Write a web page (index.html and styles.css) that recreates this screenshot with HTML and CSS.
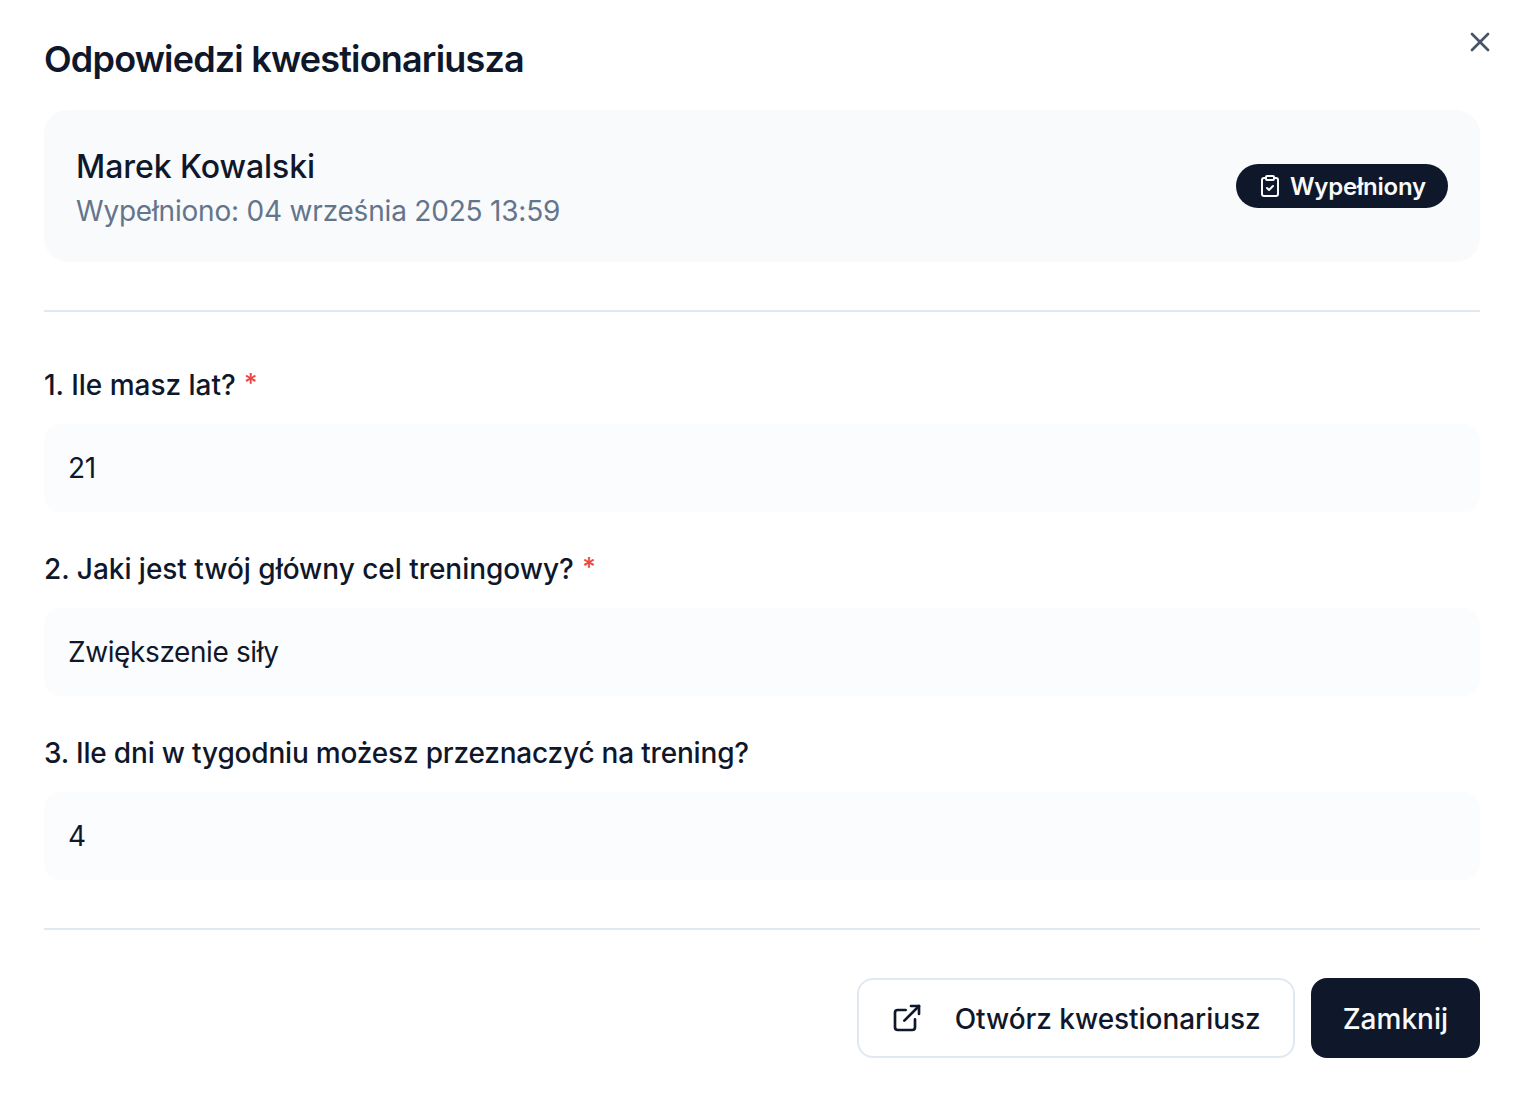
FILE: index.html
```html
<!DOCTYPE html>
<html lang="pl">
<head>
    <meta charset="UTF-8">
    <title>Odpowiedzi kwestionariusza</title>
    <link rel="stylesheet" href="styles.css">
</head>
<body>
    <div class="dialog">
        <button class="close-button" aria-label="Zamknij">
            <svg width="32" height="32" viewBox="0 0 24 24" fill="none" stroke="currentColor" stroke-width="2" stroke-linecap="round" stroke-linejoin="round"><path d="M18 6 6 18"/><path d="m6 6 12 12"/></svg>
        </button>
        <h2 class="title">Odpowiedzi kwestionariusza</h2>

        <div class="summary">
            <div>
                <div class="name">Marek Kowalski</div>
                <div class="filled-date">Wypełniono: 04 września 2025 13:59</div>
            </div>
            <span class="badge">
                <svg width="24" height="24" viewBox="0 0 24 24" fill="none" stroke="currentColor" stroke-width="2" stroke-linecap="round" stroke-linejoin="round"><rect x="8" y="2" width="8" height="4" rx="1"/><path d="M16 4h2a2 2 0 0 1 2 2v14a2 2 0 0 1-2 2H6a2 2 0 0 1-2-2V6a2 2 0 0 1 2-2h2"/><path d="m9 14 2 2 4-4"/></svg>
                Wypełniony
            </span>
        </div>

        <div class="questions">
            <div class="question">
                <div class="label">1. Ile masz lat? <span class="required">*</span></div>
                <div class="answer">21</div>
            </div>
            <div class="question">
                <div class="label">2. Jaki jest twój główny cel treningowy? <span class="required">*</span></div>
                <div class="answer">Zwiększenie siły</div>
            </div>
            <div class="question">
                <div class="label label-long">3. Ile dni w tygodniu możesz przeznaczyć na trening?</div>
                <div class="answer">4</div>
            </div>
        </div>

        <div class="footer">
            <button class="btn btn-outline">
                <svg width="32" height="32" viewBox="0 0 24 24" fill="none" stroke="currentColor" stroke-width="2" stroke-linecap="round" stroke-linejoin="round"><path d="M18 13v6a2 2 0 0 1-2 2H5a2 2 0 0 1-2-2V8a2 2 0 0 1 2-2h6"/><polyline points="15 3 21 3 21 9"/><line x1="10" y1="14" x2="21" y2="3"/></svg>
                Otwórz kwestionariusz
            </button>
            <button class="btn btn-dark">Zamknij</button>
        </div>
    </div>
</body>
</html>
```

FILE: styles.css
```css
* {
    box-sizing: border-box;
}
body {
    margin: 0;
    background: white;
    font-family: Inter, "Liberation Sans", sans-serif;
    color: #0f172a;
}
.dialog {
    position: relative;
    padding: 35px 44px 44px;
}
.close-button {
    position: absolute;
    top: 26px;
    right: 28px;
    padding: 0;
    border: none;
    background: none;
    color: #475569;
    display: flex;
}
.title {
    margin: 0;
    font-size: 36px;
    line-height: 48px;
    font-weight: 600;
    letter-spacing: -0.82px;
}
.summary {
    margin-top: 27px;
    height: 152px;
    padding: 0 32px;
    display: flex;
    align-items: center;
    justify-content: space-between;
    background: #f8fafc;
    border-radius: 24px;
}
.name {
    padding-top: 5px;
    font-size: 32px;
    line-height: 40px;
    font-weight: 500;
    letter-spacing: -0.05px;
}
.filled-date {
    margin-top: 4px;
    font-size: 28px;
    line-height: 40px;
    letter-spacing: -0.2px;
    color: #64748b;
}
.badge {
    height: 44px;
    padding: 0 22px;
    display: flex;
    align-items: center;
    gap: 8px;
    border-radius: 22px;
    background: #0f172a;
    color: #f8fafc;
    font-size: 24px;
    font-weight: 600;
    letter-spacing: -0.2px;
}
.questions {
    margin-top: 48px;
    padding: 53px 0 48px;
    border-top: 2px solid #e2e8f0;
    border-bottom: 2px solid #e2e8f0;
    display: flex;
    flex-direction: column;
    gap: 37px;
}
.label {
    height: 40px;
    font-size: 28px;
    line-height: 40px;
    font-weight: 500;
    letter-spacing: -0.03px;
}
.label-long {
    letter-spacing: -0.19px;
}
.required {
    margin-left: 1px;
    color: #ef4444;
    font-size: 26px;
    line-height: 1;
    vertical-align: 3px;
}
.answer {
    margin-top: 19px;
    height: 88px;
    padding: 0 24px;
    display: flex;
    align-items: center;
    background: rgba(248, 250, 252, 0.6);
    border-radius: 16px;
    font-size: 28px;
    letter-spacing: -0.4px;
}
.footer {
    margin-top: 48px;
    display: flex;
    justify-content: flex-end;
    gap: 16px;
}
.btn {
    height: 80px;
    padding: 2px 32px 0;
    display: flex;
    align-items: center;
    gap: 32px;
    border-radius: 16px;
    font-family: inherit;
    font-size: 28px;
    font-weight: 500;
}
.btn svg {
    margin-top: -2px;
}
.btn-outline {
    background: white;
    color: #0f172a;
    border: 2px solid #e2e8f0;
    letter-spacing: -0.05px;
}
.btn-dark {
    background: #0f172a;
    color: #f8fafc;
    border: none;
}
```
